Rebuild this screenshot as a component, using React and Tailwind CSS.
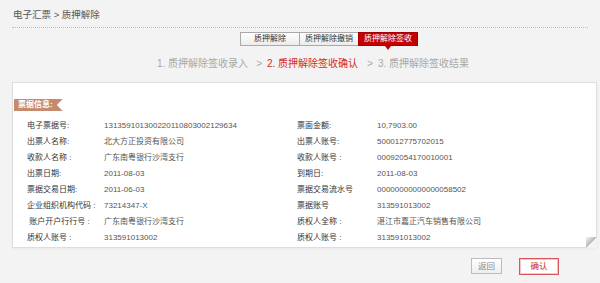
import React from 'react';

const ROWS = [
  ['电子票据号:', '131359101300220110803002129634', '票面金额:', '10,7903.00'],
  ['出票人名称:', '北大方正投资有限公司', '出票人账号:', '500012775702015'],
  ['收款人名称 :', '广东南粤银行沙湾支行', '收款人账号 :', '00092054170010001'],
  ['出票日期:', '2011-08-03', '到期日:', '2011-08-03'],
  ['票据交易日期:', '2011-06-03', '票据交易流水号', '00000000000000058502'],
  ['企业组织机构代码 :', '73214347-X', '票据账号', '313591013002'],
  ['\u00a0账户开户行行号 :', '广东南粤银行沙湾支行', '质权人全称 :', '湛江市嘉正汽车销售有限公司'],
  ['质权人账号 :', '313591013002', '质权人账号 :', '313591013002'],
];

const TABS = ['质押解除', '质押解除撤销', '质押解除签收'];

export default function App() {
  return (
    <div className="w-[600px] h-[283px] overflow-hidden bg-[#f3f3f3] font-['Liberation_Sans','Noto_Sans_CJK_SC',sans-serif]">
      {/* 面包屑 */}
      <div className="mx-[12px] pt-[9px] pb-[6px] border-b border-dotted border-[#bdbdbd]">
        <div className="text-[9.5px] leading-[12px] text-[#555] pl-[1px]">电子汇票 &gt; 质押解除</div>
      </div>

      {/* 标签按钮 */}
      <div className="flex ml-[240px] mt-[4px]">
        {TABS.map((t, i) =>
          i === 2 ? (
            <div key={t} className="relative w-[60px] h-[14px] flex items-center justify-center bg-[#c40000] border border-[#a80000] text-white text-[8px] leading-none">
              {t}
              <div className="absolute left-1/2 -translate-x-1/2 top-[13px] w-0 h-0 border-l-[3px] border-r-[3px] border-t-[4px] border-l-transparent border-r-transparent border-t-[#c40000]" />
            </div>
          ) : (
            <div key={t} className="w-[59px] h-[14px] flex items-center justify-center bg-gradient-to-b from-white to-[#ececec] border border-[#a9a9a9] border-r-0 text-[#333] text-[8px] leading-none">
              {t}
            </div>
          )
        )}
      </div>

      {/* 步骤 */}
      <div className="flex ml-[157px] mt-[12px] text-[10px] leading-[12px] text-[#a8a8a8]">
        <span>1. 质押解除签收录入</span>
        <span className="ml-[8px] mr-[5px]">&gt;</span>
        <span className="text-[#d42a2a]">2. 质押解除签收确认</span>
        <span className="ml-[9px] mr-[5px]">&gt;</span>
        <span>3. 质押解除签收结果</span>
      </div>

      {/* 票据信息 */}
      <div className="relative ml-[12px] mt-[12px] w-[585px] h-[166px] bg-white border border-[#dedede] shadow-[0_1px_2px_rgba(0,0,0,0.04)]">
        <div className="pt-[7px] pl-[1px]">
          <div className="inline-block h-[12px] pl-[4px] pr-[10px] bg-[#c68a6d] text-white text-[8px] leading-[12px] font-bold [clip-path:polygon(0_0,100%_0,88%_50%,100%_100%,0_100%)]">
            票据信息:
          </div>
        </div>
        <div className="mt-[4px] pl-[14px] grid grid-cols-[77px_193px_80px_1fr] text-[8px] text-[#333]">
          {ROWS.map((r) => (
            <React.Fragment key={r[0] + r[2]}>
              <div className="h-[16px] leading-[16px] whitespace-pre">{r[0]}</div>
              <div className="h-[16px] leading-[16px] text-[#555]">{r[1]}</div>
              <div className="h-[16px] leading-[16px]">{r[2]}</div>
              <div className="h-[16px] leading-[16px] text-[#555]">{r[3]}</div>
            </React.Fragment>
          ))}
        </div>
        {/* 卷角 */}
        <div className="absolute -right-px -bottom-px w-[11px] h-[11px] bg-[linear-gradient(315deg,#f3f3f3_48%,#b8b8b8_52%,#f6f6f6_100%)]" />
      </div>

      {/* 按钮 */}
      <div className="flex justify-end gap-[17px] pr-[41px] mt-[10px]">
        <button className="w-[31px] h-[16px] flex items-center justify-center border border-[#bdbdbd] bg-gradient-to-b from-white to-[#eeeeee] text-[#888] text-[8.5px] leading-none">
          返回
        </button>
        <button className="w-[40px] h-[17px] flex items-center justify-center border border-[#d9575c] bg-white text-[#c8262c] text-[8.5px] leading-none shadow-[inset_0_0_0_1px_rgba(217,87,92,0.35)]">
          确认
        </button>
      </div>
    </div>
  );
}
